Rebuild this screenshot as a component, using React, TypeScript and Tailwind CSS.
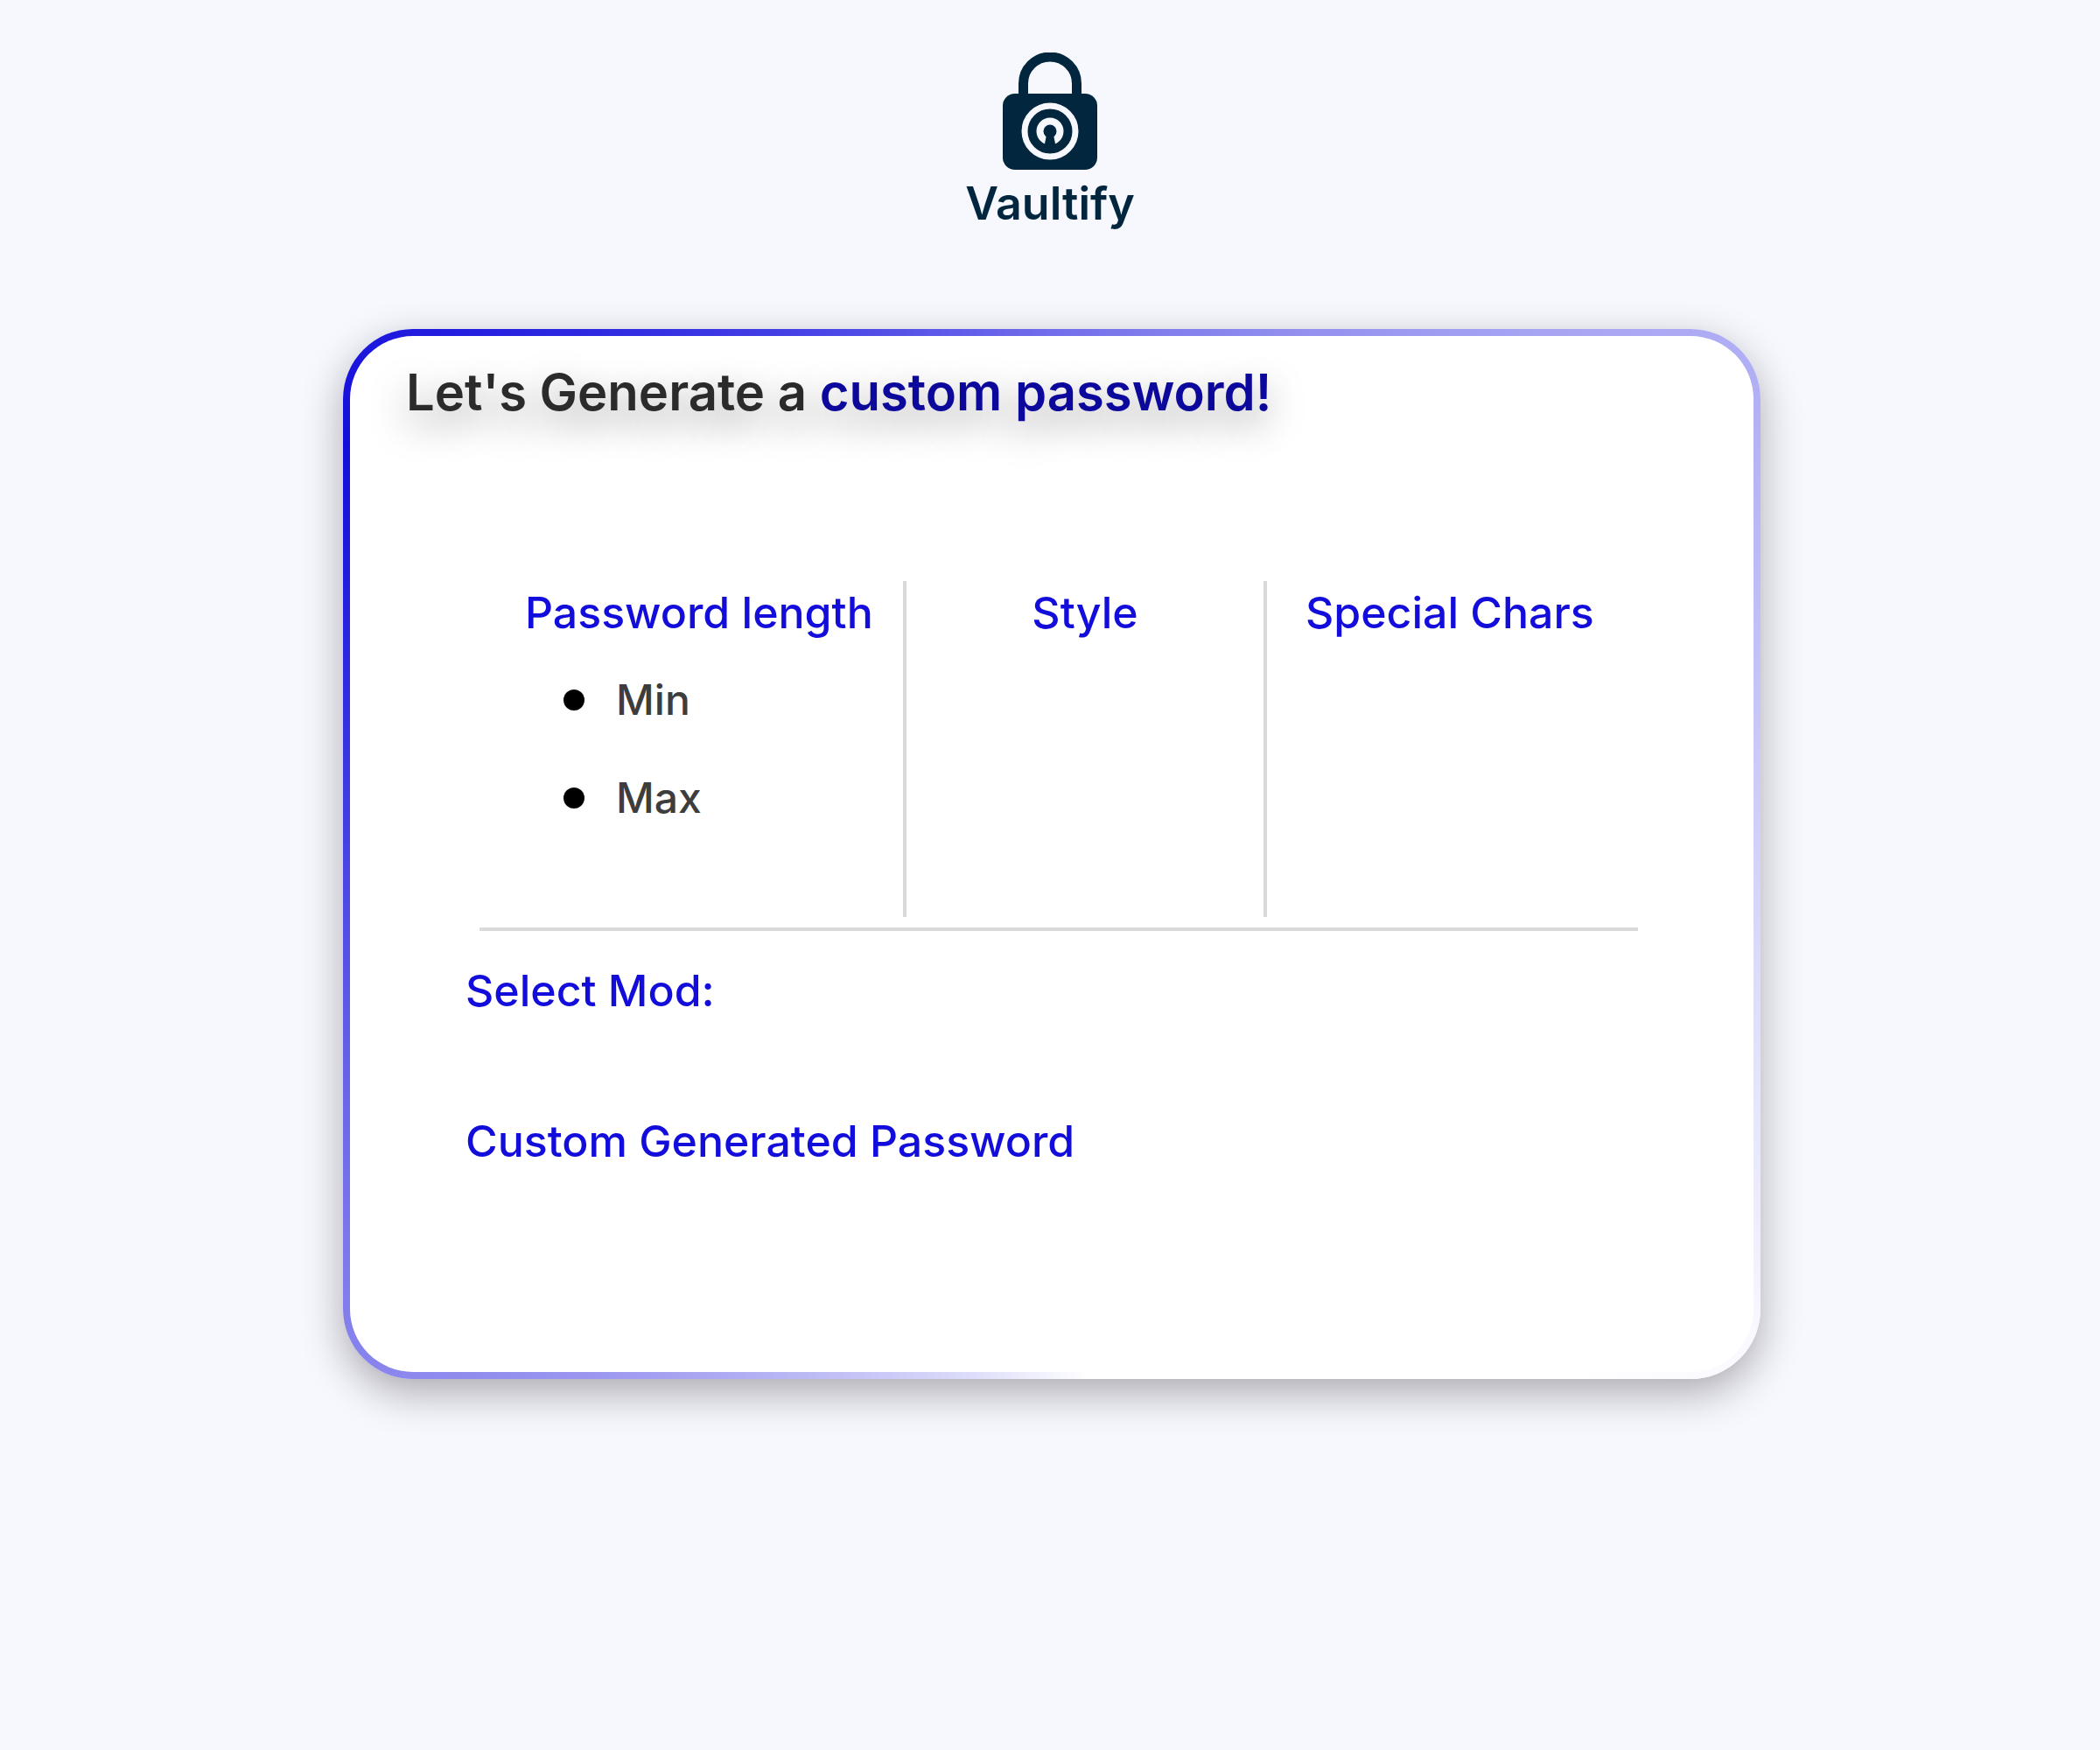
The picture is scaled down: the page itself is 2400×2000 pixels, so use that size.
const heading = "font-medium text-[50px] leading-[72px] text-[#130ddb]";

function Logo() {
  return (
    <div className="flex flex-col items-center text-[#02263e]">
      <svg viewBox="0 0 108 136" className="h-[136px] w-[108px]" aria-hidden="true">
        <path d="M23.500 52V35.500a30.500 30.500 0 0 1 61 0V52" fill="none" stroke="currentColor" strokeWidth="11" />
        <rect y="47" width="108" height="87" rx="14" fill="currentColor" />
        <circle cx="54" cy="90" r="29" fill="none" stroke="#f7f8fe" strokeWidth="7" />
        <circle cx="54" cy="90" r="15.500" fill="#f7f8fe" />
        <circle cx="54" cy="90" r="7.500" fill="currentColor" />
        <path d="M50 94h8l2.500 13h-13z" fill="currentColor" />
      </svg>
      <span className="text-[52px] font-semibold leading-[74px]">Vaultify</span>
    </div>
  );
}

export default function App() {
  return (
    <div className="min-h-screen bg-[#f7f8fe] pt-[60px] font-['Inter',sans-serif]">
      <header className="flex justify-center">
        <Logo />
      </header>
      <div className="pt-[106px] pl-1">
        <main className="mx-auto w-[1620px] max-w-full rounded-[80px] bg-[conic-gradient(#726dea_0deg,#9390ef_26deg,#a8a6f3_45deg,#b5b3f5_60deg,#ededfd_117deg,#f8f8ff_124deg,#ffffff_135deg,#ffffff_176deg,#dadafa_190deg,#9a96f0_222deg,#827eec_237deg,#130ddb_300deg,#4440e5_333deg,#726dea_360deg)] p-2 shadow-[0_16px_48px_rgba(12,0,12,0.32)]">
          <div className="rounded-[72px] bg-white px-16 pt-6 pb-[228px]">
            <h1 className="text-[58px] font-semibold leading-[80px] text-[#2b2b2b] [text-shadow:0_16px_44px_rgba(0,0,0,0.4)]">
              Let's Generate a <span className="text-[#0d089c]">custom password!</span>
            </h1>
            <div className="mt-44 mr-[68px] ml-[84px] grid grid-cols-[488px_412px_1fr] border-b-4 border-[#d9d9d9] pb-3">
              <section className="h-96 border-r-4 border-[#d9d9d9] pl-[52px]">
                <h2 className={heading}>Password length</h2>
                <ul className="mt-7 flex flex-col gap-10 pl-11 text-[48px] font-medium leading-[72px] text-[#3d3d3d]">
                  <li className="flex items-center gap-9">
                    <span className="size-6 rounded-full bg-black" />
                    Min
                  </li>
                  <li className="flex items-center gap-9">
                    <span className="size-6 rounded-full bg-black" />
                    Max
                  </li>
                </ul>
              </section>
              <section className="border-r-4 border-[#d9d9d9] text-center">
                <h2 className={heading}>Style</h2>
              </section>
              <section className="pl-11">
                <h2 className={heading}>Special Chars</h2>
              </section>
            </div>
            <div className="flex flex-col gap-[100px] pt-8 pl-[68px]">
              <h2 className={heading}>Select Mod:</h2>
              <h2 className={heading}>Custom Generated Password</h2>
            </div>
          </div>
        </main>
      </div>
    </div>
  );
}
